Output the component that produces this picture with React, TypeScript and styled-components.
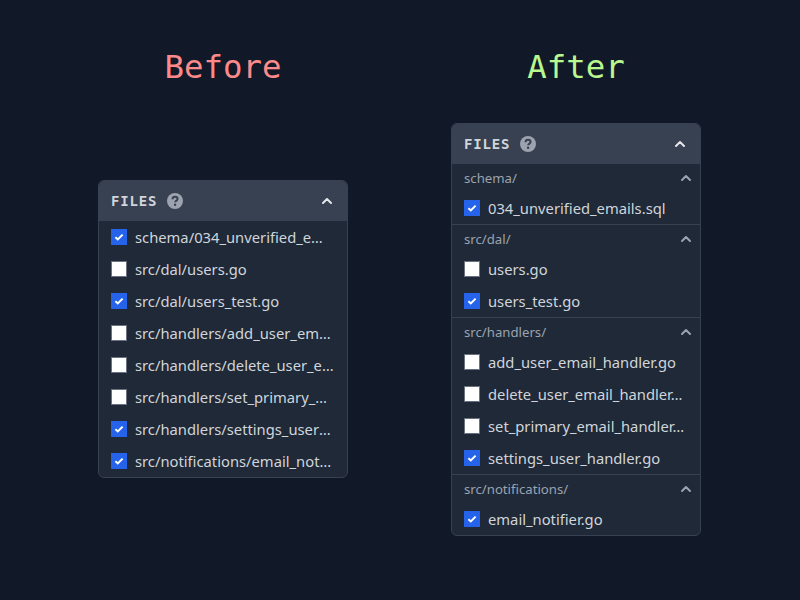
import React from "react";
import styled, { createGlobalStyle } from "styled-components";

const GlobalStyle = createGlobalStyle`
  html, body {
    margin: 0;
    height: 100%;
    background: #111827;
  }
  #root {
    height: 100%;
  }
`;

const Page = styled.div`
  width: 800px;
  height: 600px;
  display: grid;
  grid-template-columns: 250px 250px;
  grid-template-rows: 123px 413px;
  column-gap: 103px;
  justify-content: center;
  padding-right: 1px;
  box-sizing: border-box;
  font-family: "Noto Sans", sans-serif;
`;

const Title = styled.h1<{ $color: string }>`
  margin: 0;
  padding-top: 45px;
  box-sizing: border-box;
  text-align: center;
  font-family: "DejaVu Sans Mono", monospace;
  font-weight: 400;
  font-size: 32.4px;
  line-height: 44px;
  color: ${(p) => p.$color};
`;

const Cell = styled.div<{ $trim?: number }>`
  display: flex;
  align-items: center;
  padding-bottom: ${(p) => p.$trim ?? 0}px;
`;

const Panel = styled.div`
  width: 100%;
  box-sizing: border-box;
  background: #1f2937;
  border: 1px solid #374151;
  border-radius: 6px;
  overflow: hidden;
`;

const PanelHeader = styled.div`
  height: 41px;
  box-sizing: border-box;
  display: flex;
  align-items: center;
  padding: 0 14px 0 13px;
  background: #374151;
  margin: -1px -1px 0;
`;

const PanelTitle = styled.span`
  font-family: "DejaVu Sans Mono", monospace;
  font-weight: 700;
  font-size: 14px;
  letter-spacing: 0.8px;
  color: #d1d5db;
`;

const HelpIcon = styled.span`
  display: inline-flex;
  margin-left: 10px;
  color: #9ca3af;
`;

const CollapseIcon = styled.span<{ $color: string }>`
  display: inline-flex;
  margin-left: auto;
  color: ${(p) => p.$color};
`;

const Group = styled.div`
  & + & {
    border-top: 1px solid #374151;
  }
`;

const GroupHeader = styled.div`
  height: 28px;
  display: flex;
  align-items: center;
  padding: 0 7px 0 12px;
  font-size: 13.2px;
  color: #9ca3af;
`;

const Row = styled.div<{ $inset: number }>`
  height: 32px;
  display: flex;
  align-items: center;
  padding: 0 ${(p) => p.$inset}px 0 12px;
  gap: 8px;
`;

const Box = styled.span<{ $checked: boolean }>`
  flex: none;
  width: 16px;
  height: 16px;
  box-sizing: border-box;
  display: flex;
  align-items: center;
  justify-content: center;
  background: ${(p) => (p.$checked ? "#2563eb" : "#ffffff")};
  border: ${(p) => (p.$checked ? "none" : "1px solid #6b7280")};
`;

const FileName = styled.span`
  font-size: 14.75px;
  color: #d1d5db;
  white-space: nowrap;
  overflow: hidden;
  text-overflow: ellipsis;
`;

const Chevron = () => (
  <svg width="14" height="14" viewBox="0 0 14 14" fill="none">
    <path d="M3 9 L7 5 L11 9" stroke="currentColor" strokeWidth="2" strokeLinecap="round" strokeLinejoin="round" />
  </svg>
);

const Help = () => (
  <svg width="16" height="16" viewBox="0 0 16 16">
    <circle cx="8" cy="8" r="8" fill="currentColor" />
    <path d="M5.5 6.2 C5.6 4.6 6.7 3.8 8 3.8 C9.5 3.8 10.6 4.7 10.6 6 C10.6 7.6 8.2 7.6 8.2 9.3" fill="none" stroke="#374151" strokeWidth="2" />
    <circle cx="8.1" cy="11.8" r="1.2" fill="#374151" />
  </svg>
);

const Check = () => (
  <svg width="12" height="12" viewBox="0 0 12 12" fill="none">
    <path d="M2.4 6.2 L4.8 8.4 L9.6 3.6" stroke="#ffffff" strokeWidth="2" />
  </svg>
);

const FileRow = ({ name, checked, inset }: { name: string; checked: boolean; inset: number }) => (
  <Row $inset={inset}>
    <Box $checked={checked}>{checked && <Check />}</Box>
    <FileName>{name}</FileName>
  </Row>
);

const Header = () => (
  <PanelHeader>
    <PanelTitle>FILES</PanelTitle>
    <HelpIcon>
      <Help />
    </HelpIcon>
    <CollapseIcon $color="#e5e7eb">
      <Chevron />
    </CollapseIcon>
  </PanelHeader>
);

const flatFiles: [string, boolean][] = [
  ["schema/034_unverified_emails.sql", true],
  ["src/dal/users.go", false],
  ["src/dal/users_test.go", true],
  ["src/handlers/add_user_email_handler.go", false],
  ["src/handlers/delete_user_email_handler.go", false],
  ["src/handlers/set_primary_email_handler.go", false],
  ["src/handlers/settings_user_handler.go", true],
  ["src/notifications/email_notifier.go", true],
];

const groups: { dir: string; files: [string, boolean][] }[] = [
  { dir: "schema/", files: [["034_unverified_emails.sql", true]] },
  {
    dir: "src/dal/",
    files: [
      ["users.go", false],
      ["users_test.go", true],
    ],
  },
  {
    dir: "src/handlers/",
    files: [
      ["add_user_email_handler.go", false],
      ["delete_user_email_handler.go", false],
      ["set_primary_email_handler.go", false],
      ["settings_user_handler.go", true],
    ],
  },
  { dir: "src/notifications/", files: [["email_notifier.go", true]] },
];

export default function App() {
  return (
    <>
      <GlobalStyle />
      <Page>
        <Title $color="#fc8a8a">Before</Title>
        <Title $color="#b9f78f">After</Title>
        <Cell $trim={1}>
          <Panel>
            <Header />
            {flatFiles.map(([name, checked]) => (
              <FileRow key={name} name={name} checked={checked} inset={13} />
            ))}
          </Panel>
        </Cell>
        <Cell>
          <Panel>
            <Header />
            {groups.map((g) => (
              <Group key={g.dir}>
                <GroupHeader>
                  {g.dir}
                  <CollapseIcon $color="#9ca3af">
                    <Chevron />
                  </CollapseIcon>
                </GroupHeader>
                {g.files.map(([name, checked]) => (
                  <FileRow key={name} name={name} checked={checked} inset={14} />
                ))}
              </Group>
            ))}
          </Panel>
        </Cell>
      </Page>
    </>
  );
}
